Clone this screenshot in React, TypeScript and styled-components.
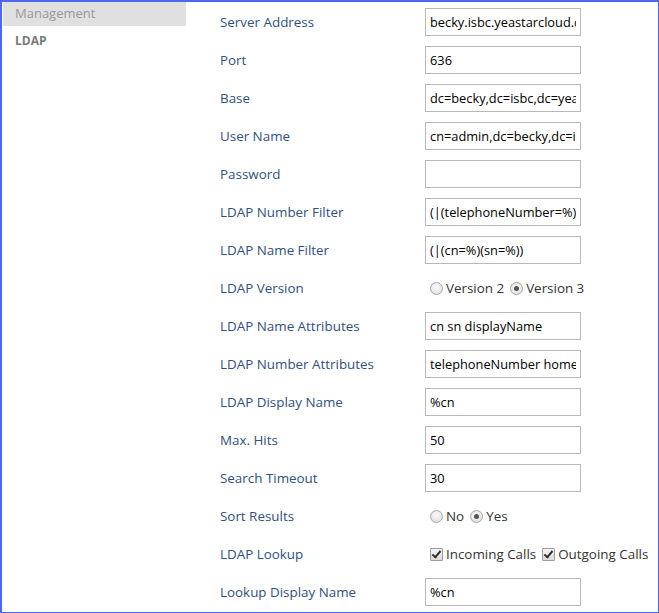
import React from "react";
import styled, { createGlobalStyle } from "styled-components";

const Global = createGlobalStyle`
  html, body { margin: 0; padding: 0; background: #fff; }
  body { font-family: "Open Sans", "Noto Sans", sans-serif; }
`;

const Frame = styled.div`
  box-sizing: border-box;
  width: 659px;
  height: 613px;
  border-style: solid;
  border-color: #4a68f0;
  border-width: 2px 1px 1px 2px;
  display: flex;
  overflow: hidden;
`;

const Sidebar = styled.nav`
  width: 184px;
  padding-left: 1px;
  display: flex;
  flex-direction: column;
  flex-shrink: 0;
`;

const SideHeader = styled.div`
  width: 183px;
  height: 24px;
  background: #e0e0e0;
  color: #9a9a9a;
  font-size: 13px;
  line-height: 22px;
  padding-left: 12px;
  box-sizing: border-box;
`;

const SideItem = styled.div`
  color: #7a7a7a;
  font-weight: bold;
  font-size: 12px;
  line-height: 30px;
  padding-left: 12px;
`;

const Content = styled.div`
  flex: 1;
  padding: 1px 0 0 33px;
  display: flex;
  flex-direction: column;
`;

const Row = styled.div`
  height: 38px;
  display: flex;
  align-items: center;
`;

const Label = styled.div`
  width: 205px;
  flex-shrink: 0;
  color: #31507f;
  font-size: 13.4px;
`;

const TextInput = styled.input`
  box-sizing: border-box;
  width: 156px;
  height: 28px;
  border: 1px solid #b8b8b8;
  padding: 0 4px;
  font-family: "Open Sans", "Noto Sans", sans-serif;
  font-size: 12.8px;
  color: #000;
  background: #fff;
  outline: none;
  margin: 0;
`;

const Options = styled.div`
  display: flex;
  align-items: center;
  font-size: 13.4px;
  color: #333;
  white-space: nowrap;
`;

const Option = styled.label`
  display: inline-flex;
  align-items: center;
  margin-right: 1px;
`;

const Radio = styled.input.attrs({ type: "radio" })`
  appearance: none;
  box-sizing: border-box;
  width: 13px;
  height: 13px;
  margin: 1px 3px 0 5px;
  border-radius: 50%;
  border: 1px solid #a8a8a8;
  background: radial-gradient(circle at 50% 40%, #fafafa 0%, #e4e4e4 70%, #d6d6d6 100%);
  position: relative;
  &:checked::after {
    content: "";
    position: absolute;
    left: 3px;
    top: 3px;
    width: 5px;
    height: 5px;
    border-radius: 50%;
    background: #555;
  }
`;

const Check = styled.input.attrs({ type: "checkbox" })`
  appearance: none;
  box-sizing: border-box;
  width: 13px;
  height: 13px;
  margin: 1px 3px 0 5px;
  border: 1px solid #9c9c9c;
  border-radius: 1px;
  background: linear-gradient(#f4f4f4, #dcdcdc);
  position: relative;
  &:checked::after {
    content: "";
    position: absolute;
    left: 3px;
    top: 0px;
    width: 3px;
    height: 7px;
    border: solid #333;
    border-width: 0 2px 2px 0;
    transform: rotate(40deg);
  }
`;

const textRows: [string, string][] = [
  ["Server Address", "becky.isbc.yeastarcloud.com"],
  ["Port", "636"],
  ["Base", "dc=becky,dc=isbc,dc=yeastarcloud,dc=com"],
  ["User Name", "cn=admin,dc=becky,dc=isbc"],
  ["Password", ""],
  ["LDAP Number Filter", "(|(telephoneNumber=%)(mobile=%))"],
  ["LDAP Name Filter", "(|(cn=%)(sn=%))"],
];

const attrRows: [string, string][] = [
  ["LDAP Name Attributes", "cn sn displayName"],
  ["LDAP Number Attributes", "telephoneNumber homePhone mobile"],
  ["LDAP Display Name", "%cn"],
  ["Max. Hits", "50"],
  ["Search Timeout", "30"],
];

export default function App() {
  return (
    <>
      <Global />
      <Frame>
        <Sidebar>
          <SideHeader>Management</SideHeader>
          <SideItem>LDAP</SideItem>
        </Sidebar>
        <Content>
          {textRows.map(([l, v]) => (
            <Row key={l}>
              <Label>{l}</Label>
              <TextInput readOnly value={v} type={l === "Password" ? "password" : "text"} />
            </Row>
          ))}
          <Row>
            <Label>LDAP Version</Label>
            <Options>
              <Option><Radio name="ver" readOnly />Version 2</Option>
              <Option><Radio name="ver" defaultChecked />Version 3</Option>
            </Options>
          </Row>
          {attrRows.map(([l, v]) => (
            <Row key={l}>
              <Label>{l}</Label>
              <TextInput readOnly value={v} />
            </Row>
          ))}
          <Row>
            <Label>Sort Results</Label>
            <Options>
              <Option><Radio name="sort" />No</Option>
              <Option><Radio name="sort" defaultChecked />Yes</Option>
            </Options>
          </Row>
          <Row>
            <Label>LDAP Lookup</Label>
            <Options>
              <Option><Check defaultChecked />Incoming Calls</Option>
              <Option><Check defaultChecked />Outgoing Calls</Option>
            </Options>
          </Row>
          <Row>
            <Label>Lookup Display Name</Label>
            <TextInput readOnly value="%cn" />
          </Row>
        </Content>
      </Frame>
    </>
  );
}
